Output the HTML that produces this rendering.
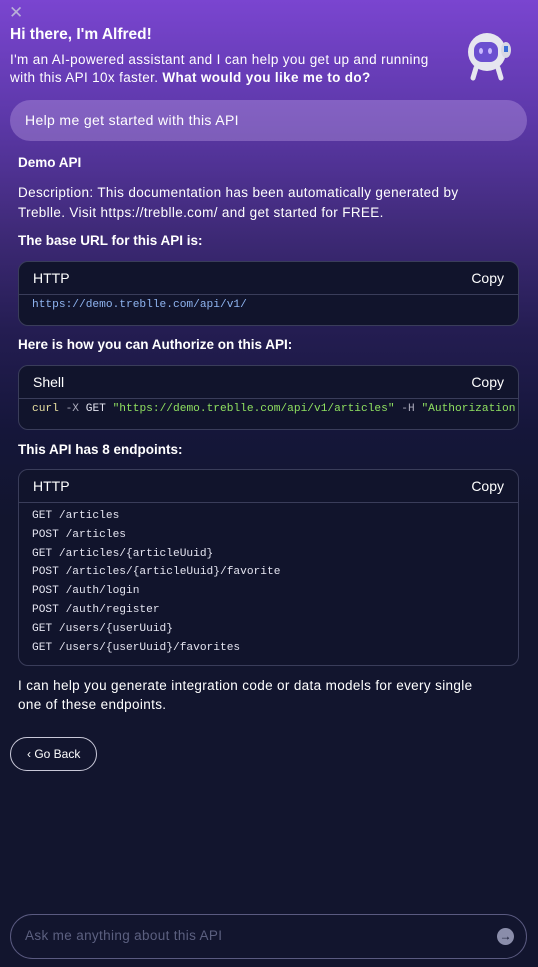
<!DOCTYPE html>
<html><head><style>
*{margin:0;padding:0;box-sizing:border-box}
body{width:538px;height:967px;overflow:hidden;font-family:"Liberation Sans",sans-serif;color:#fff;
background:linear-gradient(180deg,#7a45d0 0px,#5c38a8 120px,#3f2a78 230px,#241d52 330px,#15163a 430px,#12152e 520px,#12152e 100%);position:relative}
.a{position:absolute}
.t{letter-spacing:0.35px}
.code{position:absolute;left:18px;width:501px;background:#11142c;border:1px solid #3a3d5a;border-radius:10px;overflow:hidden}
.hd{height:33px;border-bottom:1px solid #3a3d5a;display:flex;justify-content:space-between;align-items:center;padding:0 14px;font-size:14px}
.mono{font-family:"Liberation Mono",monospace;font-size:11.2px;white-space:pre;padding:0 13px;color:#e4e4f0}
.lbl{position:absolute;left:18px;font-size:13.5px;font-weight:bold}
</style></head><body>
<div class="a" style="left:9px;top:3px;font-size:17px;color:#b9b0d8">✕</div>
<div class="a" style="left:10px;top:26px;font-size:15.5px;font-weight:bold">Hi there, I'm Alfred!</div>
<div class="a t" style="left:10px;top:51px;font-size:13.5px;line-height:18px;width:440px">I'm an AI-powered assistant and I can help you get up and running with this API 10x faster. <b>What would you like me to do?</b></div>
<svg class="a" style="left:462px;top:30px" width="54" height="54" viewBox="0 0 54 54">
<ellipse cx="25" cy="22" rx="19" ry="19" fill="#e6e6ef"/>
<rect x="12" y="12" width="24" height="20" rx="8" fill="#6b4fd0"/>
<ellipse cx="19" cy="21" rx="2" ry="3" fill="#c9b8ff"/><ellipse cx="28" cy="21" rx="2" ry="3" fill="#c9b8ff"/>
<ellipse cx="44" cy="20" rx="5" ry="8" fill="#d8d8e4"/><rect x="42" y="16" width="4" height="6" fill="#3a6fd8"/>
<path d="M14 38 l-3 10 M36 38 l3 10" stroke="#e6e6ef" stroke-width="5" stroke-linecap="round"/>
</svg>
<div class="a t" style="left:10px;top:100px;width:517px;height:41px;border-radius:21px;background:rgba(190,160,230,0.38);font-size:14px;padding:12px 15px">Help me get started with this API</div>
<div class="lbl" style="top:155px">Demo API</div>
<div class="a t" style="left:18px;top:183px;font-size:13.5px;line-height:20px;width:472px">Description: This documentation has been automatically generated by Treblle. Visit https://treblle.com/ and get started for FREE.</div>
<div class="lbl" style="top:233px">The base URL for this API is:</div>
<div class="code" style="top:261px;height:65px"><div class="hd"><span>HTTP</span><span>Copy</span></div><div class="mono" style="padding-top:4px;color:#8fb4f0">https://demo.treblle.com/api/v1/</div></div>
<div class="lbl" style="top:337px">Here is how you can Authorize on this API:</div>
<div class="code" style="top:365px;height:65px"><div class="hd"><span>Shell</span><span>Copy</span></div><div class="mono" style="padding-top:4px"><span style="color:#e8e0a0">curl</span> <span style="color:#aab">-X</span> GET <span style="color:#8fe060">"https://demo.treblle.com/api/v1/articles"</span> <span style="color:#aab">-H</span> <span style="color:#8fe060">"Authorization:</span></div></div>
<div class="lbl" style="top:442px">This API has 8 endpoints:</div>
<div class="code" style="top:469px;height:197px"><div class="hd"><span>HTTP</span><span>Copy</span></div><div class="mono" style="padding-top:4px;line-height:18.8px">GET /articles
POST /articles
GET /articles/{articleUuid}
POST /articles/{articleUuid}/favorite
POST /auth/login
POST /auth/register
GET /users/{userUuid}
GET /users/{userUuid}/favorites</div></div>
<div class="a t" style="left:18px;top:676px;font-size:13.5px;line-height:19px;width:480px">I can help you generate integration code or data models for every single one of these endpoints.</div>
<div class="a" style="left:10px;top:737px;width:87px;height:34px;border:1px solid #c8c8d8;border-radius:17px;font-size:12px;padding:9px 0 0 16px">‹ Go Back</div>
<div class="a t" style="left:10px;top:914px;width:517px;height:45px;border:1px solid #5a5a80;border-radius:23px;font-size:13.5px;color:#5c6080;padding:13px 14px">Ask me anything about this API</div>
<div class="a" style="left:497px;top:928px;width:17px;height:17px;border-radius:50%;background:#8a8daa;color:#12152e;font-size:12px;font-weight:bold;text-align:center;line-height:17px">→</div>
</body></html>
